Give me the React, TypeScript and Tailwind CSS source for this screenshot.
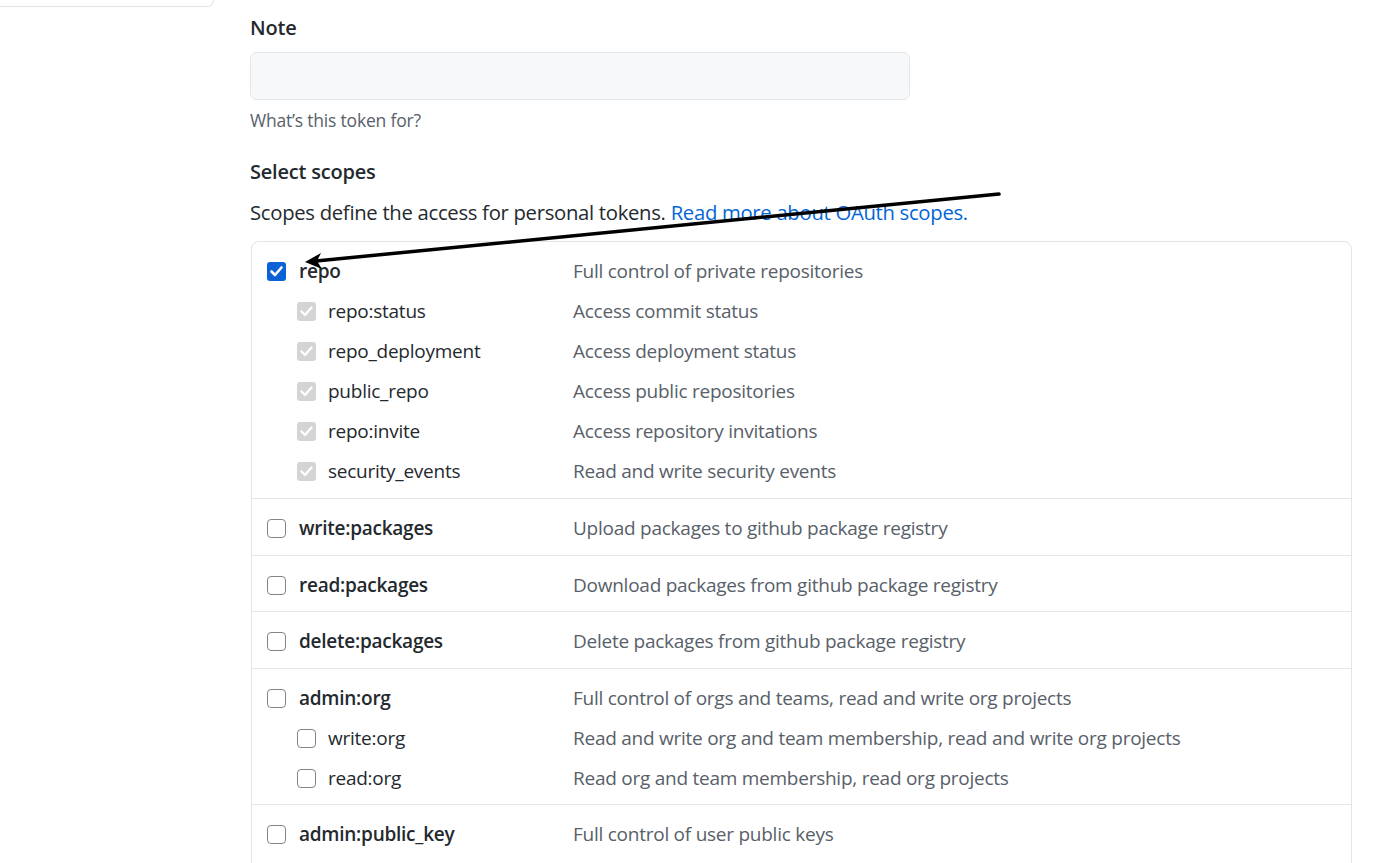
import React from "react";

type Item = { name: string; desc: string; sub?: boolean; state?: "checked" | "disabled" | "empty" };

const groups: Item[][] = [
  [
    { name: "repo", desc: "Full control of private repositories", state: "checked" },
    { name: "repo:status", desc: "Access commit status", sub: true, state: "disabled" },
    { name: "repo_deployment", desc: "Access deployment status", sub: true, state: "disabled" },
    { name: "public_repo", desc: "Access public repositories", sub: true, state: "disabled" },
    { name: "repo:invite", desc: "Access repository invitations", sub: true, state: "disabled" },
    { name: "security_events", desc: "Read and write security events", sub: true, state: "disabled" },
  ],
  [{ name: "write:packages", desc: "Upload packages to github package registry" }],
  [{ name: "read:packages", desc: "Download packages from github package registry" }],
  [{ name: "delete:packages", desc: "Delete packages from github package registry" }],
  [
    { name: "admin:org", desc: "Full control of orgs and teams, read and write org projects" },
    { name: "write:org", desc: "Read and write org and team membership, read and write org projects", sub: true },
    { name: "read:org", desc: "Read org and team membership, read org projects", sub: true },
  ],
  [
    { name: "admin:public_key", desc: "Full control of user public keys" },
    { name: "write:public_key", desc: "Write user public keys", sub: true },
    { name: "read:public_key", desc: "Read user public keys", sub: true },
  ],
];

const groupPad = [
  "pt-[9px] pb-[7px]",
  "border-t border-[#e1e4e8] pt-[9px] pb-[7px]",
  "border-t border-[#e1e4e8] pt-[9px] pb-[6px]",
  "border-t border-[#e1e4e8] pt-[9px] pb-[7px]",
  "border-t border-[#e1e4e8] pt-[9px] pb-[6px]",
  "border-t border-[#e1e4e8] pt-[9px] pb-[7px]",
];

function Check({ state = "empty" }: { state?: Item["state"] }) {
  if (state === "checked") {
    return (
      <span className="flex h-[19px] w-[19px] shrink-0 items-center justify-center rounded-[3px] bg-[#0b62d6]">
        <svg width="19" height="19" viewBox="0 0 19 19">
          <polyline points="4.5,9.5 8,13 14.5,5.5" fill="none" stroke="white" strokeWidth="2.6" strokeLinecap="round" strokeLinejoin="round" />
        </svg>
      </span>
    );
  }
  if (state === "disabled") {
    return (
      <span className="flex h-[19px] w-[19px] shrink-0 items-center justify-center rounded-[3px] bg-[#d4d4d4]">
        <svg width="19" height="19" viewBox="0 0 19 19">
          <polyline points="4.5,9.5 8,13 14.5,5.5" fill="none" stroke="white" strokeWidth="2.4" strokeLinecap="round" strokeLinejoin="round" />
        </svg>
      </span>
    );
  }
  return <span className="block h-[19px] w-[19px] shrink-0 rounded-[4px] border border-[#858585] bg-white" />;
}

export default function App() {
  const font = { fontFamily: '"Open Sans", "Noto Sans", Arial, sans-serif' };
  return (
    <div className="relative h-[863px] w-full overflow-hidden bg-white text-[#24292e]" style={font}>
      <div className="flex">
        <div className="w-[250px] shrink-0">
          <div className="-ml-[10px] h-[7px] w-[224px] rounded-br-[7px] border-b border-r border-[#e1e4e8]" />
        </div>
        <div className="w-[1102px] pt-[13px]">
          <div className="text-[20px] font-semibold leading-[30px] tracking-[-0.2px]">Note</div>
          <div className="mt-[9px] h-[48px] w-[660px] rounded-[7px] border border-[#e1e4e8] bg-[#f7f8fa]" />
          <div className="mt-[8px] text-[17.5px] leading-[24px] tracking-[-0.2px] text-[#586069]">What’s this token for?</div>
          <div className="mt-[25px] text-[20px] font-semibold leading-[30px] tracking-[-0.2px]">Select scopes</div>
          <div className="mt-[10px] text-[20.3px] leading-[30px] tracking-[-0.3px]">
            Scopes define the access for personal tokens. <span className="text-[#0366d6]">Read more about OAuth scopes.</span>
          </div>
          <div className="ml-px mt-[14px] rounded-[8px] border border-[#e1e4e8]">
            {groups.map((g, gi) => (
              <div key={gi} className={groupPad[gi]}>
                {g.map((it) => (
                  <div key={it.name} className="flex h-[40px] items-center pl-[15px] text-[19px] tracking-[-0.25px]">
                    <div className={"flex w-[306px] shrink-0 items-center " + (it.sub ? "pl-[30px]" : "")}>
                      <Check state={it.state} />
                      <span className={it.sub ? "ml-[12px]" : "ml-[13px] font-semibold"}>{it.name}</span>
                    </div>
                    <span className="text-[#586069]">{it.desc}</span>
                  </div>
                ))}
              </div>
            ))}
          </div>
        </div>
      </div>
      <svg className="pointer-events-none absolute left-0 top-0" width="1398" height="863">
        <line x1="999" y1="194" x2="316" y2="261" stroke="black" strokeWidth="3.5" strokeLinecap="round" />
        <polygon points="305,262 321,253 317,261 322,269" fill="black" />
      </svg>
    </div>
  );
}
